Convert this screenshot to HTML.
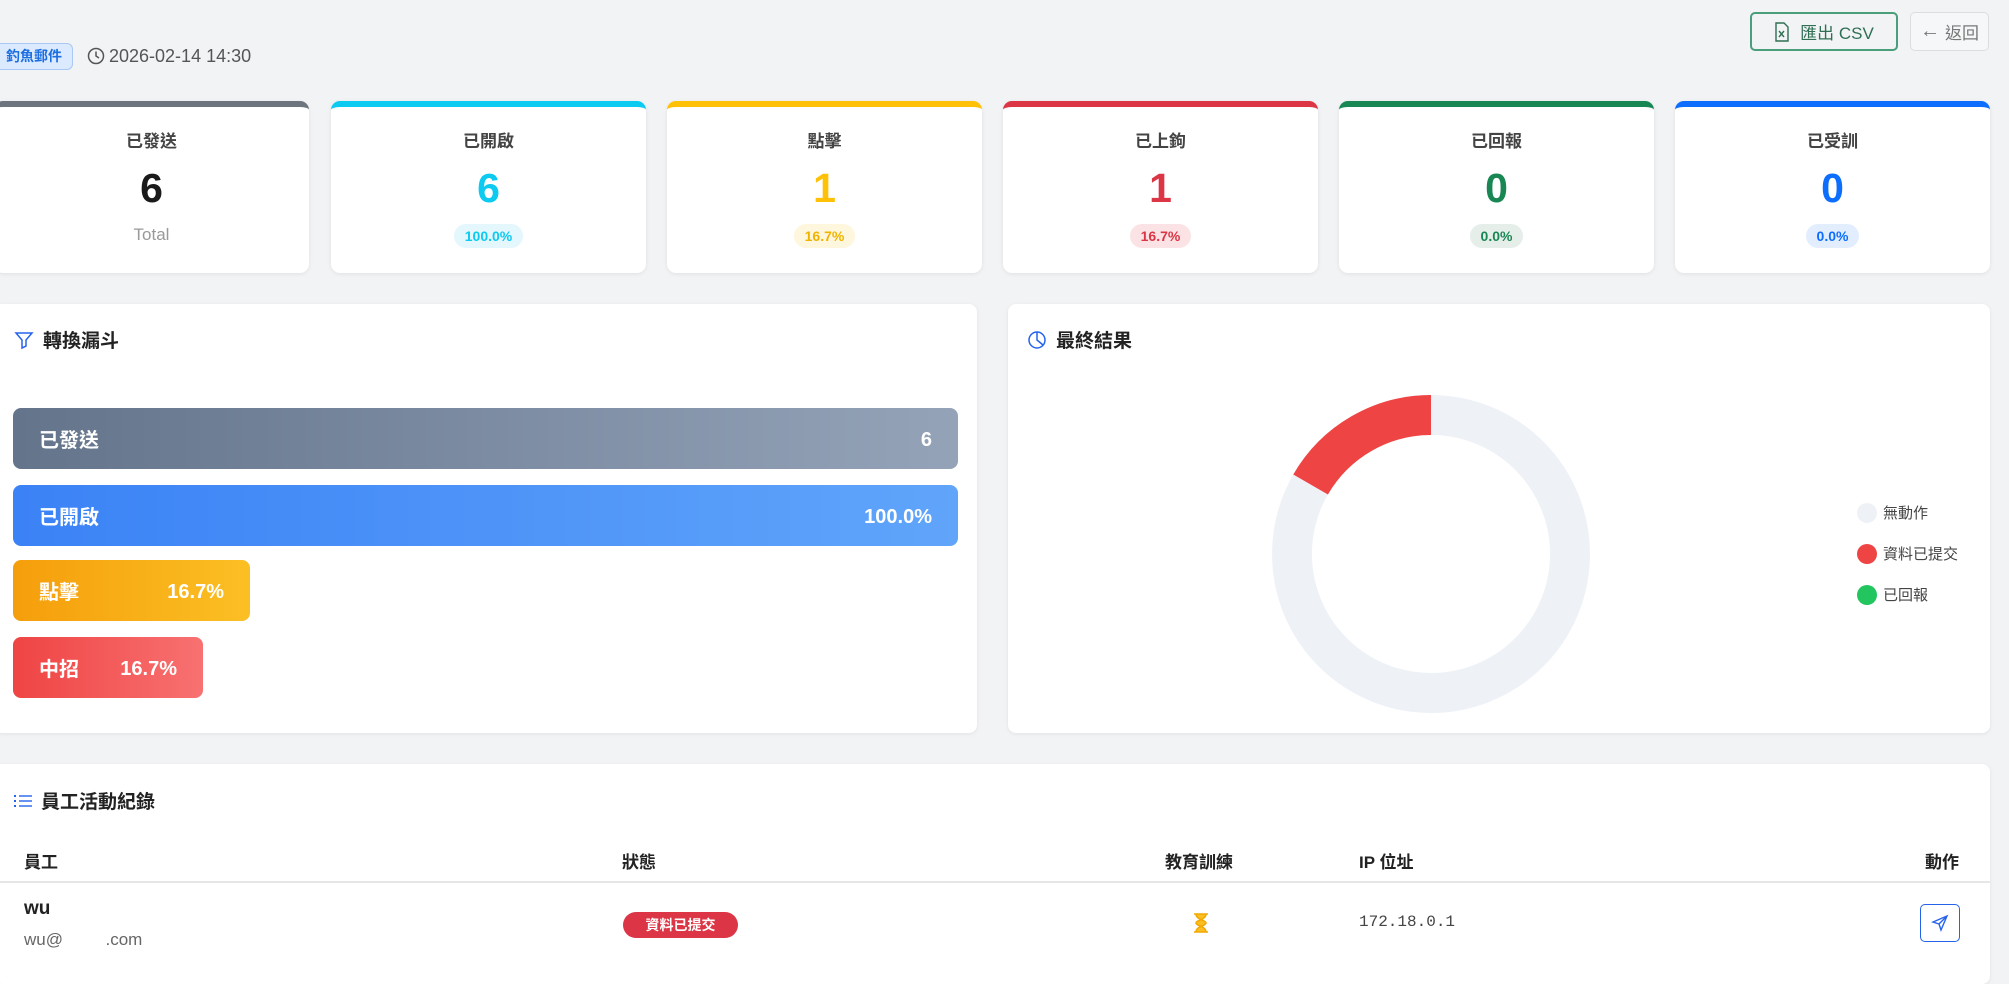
<!DOCTYPE html>
<html><head><meta charset="utf-8"><style>
*{box-sizing:border-box;margin:0;padding:0}
body{width:2009px;height:961px;overflow:hidden;background:#f2f3f5;font-family:"Liberation Sans","Noto Sans CJK TC",sans-serif;position:relative;color:#222}
.abs{position:absolute}
.tag{left:-6px;top:43px;width:79px;height:27px;background:#dbeafe;border:1px solid #a9c8f5;border-radius:6px;color:#1d6fe0;font-size:14px;font-weight:bold;line-height:25px;padding-left:11px}
.date{left:87px;top:45px;font-size:18px;color:#555;line-height:22px;display:flex;align-items:center;gap:4px}
.btn{top:12px;height:39px;border-radius:5px;display:flex;align-items:center;justify-content:center;font-size:17px}
.card{top:101px;width:315px;height:172px;background:#fff;border-radius:9px;box-shadow:0 1px 4px rgba(0,0,0,.08);border-top:6px solid;text-align:center}
.card .t{margin-top:20px;font-size:17px;color:#444;font-weight:bold}
.card .n{margin-top:13px;font-size:41px;font-weight:bold;line-height:46px}
.card .b{display:inline-block;margin-top:13px;font-size:14px;font-weight:bold;padding:4px 11px;border-radius:13px}
.card .tot{margin-top:14px;font-size:17px;color:#999}
.panel{background:#fff;border-radius:8px;box-shadow:0 1px 4px rgba(0,0,0,.07)}
.ph{font-size:19px;font-weight:bold;color:#222;display:flex;align-items:center;gap:9px}
.bar{left:13px;height:61px;border-radius:8px;color:#fff;font-size:20px;font-weight:bold;display:flex;align-items:center;justify-content:space-between;padding:0 26px}
.bar span:last-child{position:relative;top:2px}
.th{top:848px;font-size:17px;font-weight:bold;color:#222}
.lg{left:1857px;font-size:15px;color:#444;display:flex;align-items:center;gap:6px}
.lg i{display:inline-block;width:20px;height:20px;border-radius:50%}
</style></head><body>
<div class="abs tag">釣魚郵件</div>
<div class="abs date"><svg width="18" height="18" viewBox="0 0 18 18"><circle cx="9" cy="9" r="7.5" fill="none" stroke="#555" stroke-width="1.5"/><path d="M9 4.5V9l3 2" fill="none" stroke="#555" stroke-width="1.5"/></svg>2026-02-14 14:30</div>
<div class="abs btn" style="left:1750px;width:148px;border:2px solid #4a9f7a;color:#2f6f54;gap:10px"><svg width="16" height="20" viewBox="0 0 16 20"><path d="M2 1h8l4 4v14H2z" fill="none" stroke="#2f6f54" stroke-width="1.4"/><path d="M5 9l5 6M10 9l-5 6" stroke="#2f6f54" stroke-width="1.4"/></svg>匯出 CSV</div>
<div class="abs btn" style="left:1910px;width:79px;background:#f6f7f8;border:1px solid #ddd;color:#777;gap:5px"><span style="font-size:20px">←</span>返回</div>

<div class="abs card" style="left:-6px;border-color:#6c757d"><div class="t">已發送</div><div class="n" style="color:#1a1a1a">6</div><div class="tot">Total</div></div>
<div class="abs card" style="left:331px;border-color:#0dcaf0"><div class="t">已開啟</div><div class="n" style="color:#0dcaf0">6</div><div class="b" style="background:#e3f7fd;color:#0dcaf0">100.0%</div></div>
<div class="abs card" style="left:667px;border-color:#ffc107"><div class="t">點擊</div><div class="n" style="color:#ffc107">1</div><div class="b" style="background:#fff6de;color:#f0b400">16.7%</div></div>
<div class="abs card" style="left:1003px;border-color:#dc3545"><div class="t">已上鉤</div><div class="n" style="color:#dc3545">1</div><div class="b" style="background:#fbe3e5;color:#dc3545">16.7%</div></div>
<div class="abs card" style="left:1339px;border-color:#198754"><div class="t">已回報</div><div class="n" style="color:#198754">0</div><div class="b" style="background:#e6eeea;color:#198754">0.0%</div></div>
<div class="abs card" style="left:1675px;border-color:#0d6efd"><div class="t">已受訓</div><div class="n" style="color:#0d6efd">0</div><div class="b" style="background:#e2eefe;color:#0d6efd">0.0%</div></div>

<div class="abs panel" style="left:-6px;top:304px;width:983px;height:429px"></div>
<div class="abs ph" style="left:14px;top:326px"><svg width="20" height="20" viewBox="0 0 20 20"><path d="M2 3h16l-6 7v6l-4 2v-8z" fill="none" stroke="#2563eb" stroke-width="1.5"/></svg>轉換漏斗</div>
<div class="abs bar" style="top:408px;width:945px;background:linear-gradient(90deg,#64748b,#94a3b8)"><span>已發送</span><span>6</span></div>
<div class="abs bar" style="top:485px;width:945px;background:linear-gradient(90deg,#3b82f6,#60a5fa)"><span>已開啟</span><span>100.0%</span></div>
<div class="abs bar" style="top:560px;width:237px;background:linear-gradient(90deg,#f59e0b,#fbbf24)"><span>點擊</span><span>16.7%</span></div>
<div class="abs bar" style="top:637px;width:190px;background:linear-gradient(90deg,#ef4444,#f87171)"><span>中招</span><span>16.7%</span></div>

<div class="abs panel" style="left:1008px;top:304px;width:982px;height:429px"></div>
<div class="abs ph" style="left:1027px;top:326px"><svg width="20" height="20" viewBox="0 0 20 20"><circle cx="10" cy="10" r="8" fill="none" stroke="#2563eb" stroke-width="1.5"/><path d="M10 2v8l6 5" fill="none" stroke="#2563eb" stroke-width="1.5"/></svg>最終結果</div>
<svg class="abs" style="left:1270px;top:393px" width="322" height="322" viewBox="0 0 322 322">
<circle cx="161" cy="161" r="139" fill="none" stroke="#eef2f7" stroke-width="40"/>
<path d="M161 22 A139 139 0 0 0 40.6 91.5" fill="none" stroke="#ef4444" stroke-width="40"/>
</svg>
<div class="abs lg" style="top:502px"><i style="background:#eef2f7"></i>無動作</div>
<div class="abs lg" style="top:543px"><i style="background:#ef4444"></i>資料已提交</div>
<div class="abs lg" style="top:584px"><i style="background:#22c55e"></i>已回報</div>

<div class="abs panel" style="left:-6px;top:764px;width:1996px;height:220px"></div>
<div class="abs ph" style="left:14px;top:787px"><svg width="18" height="16" viewBox="0 0 18 16"><g fill="#2563eb"><rect x="0" y="2" width="2" height="2"/><rect x="0" y="7" width="2" height="2"/><rect x="0" y="12" width="2" height="2"/><rect x="5" y="2.3" width="13" height="1.4"/><rect x="5" y="7.3" width="13" height="1.4"/><rect x="5" y="12.3" width="13" height="1.4"/></g></svg>員工活動紀錄</div>
<div class="abs th" style="left:24px">員工</div>
<div class="abs th" style="left:622px">狀態</div>
<div class="abs th" style="left:1165px">教育訓練</div>
<div class="abs th" style="left:1359px">IP 位址</div>
<div class="abs th" style="left:1925px">動作</div>
<div class="abs" style="left:0;top:881px;width:1990px;height:2px;background:#e6e6e6"></div>
<div class="abs" style="left:24px;top:898px;font-size:19px;font-weight:bold">wu</div>
<div class="abs" style="left:24px;top:930px;font-size:17px;color:#666">wu@&nbsp;&nbsp;&nbsp;&nbsp;&nbsp;&nbsp;&nbsp;&nbsp;&nbsp;.com</div>
<div class="abs" style="left:623px;top:912px;width:115px;height:26px;border-radius:13px;background:#dc3545;color:#fff;font-size:14px;font-weight:bold;text-align:center;line-height:26px">資料已提交</div>
<svg class="abs" style="left:1193px;top:913px" width="16" height="20" viewBox="0 0 16 20"><path d="M1 1h14M1 19h14M3 1c0 6 10 6 10 9s-10 3-10 9h10c0-6-10-6-10-9s10-3 10-9" fill="#fbbf24" stroke="#f0a800" stroke-width="1.5"/></svg>
<div class="abs" style="left:1359px;top:913px;font-family:'Liberation Mono',monospace;font-size:16px;color:#444">172.18.0.1</div>
<div class="abs" style="left:1920px;top:904px;width:40px;height:38px;border:1.5px solid #2563eb;border-radius:5px;display:flex;align-items:center;justify-content:center"><svg width="18" height="18" viewBox="0 0 18 18"><path d="M16 2L2 8l6 2 2 6z M16 2L8 10" fill="none" stroke="#2563eb" stroke-width="1.4"/></svg></div>
</body></html>
